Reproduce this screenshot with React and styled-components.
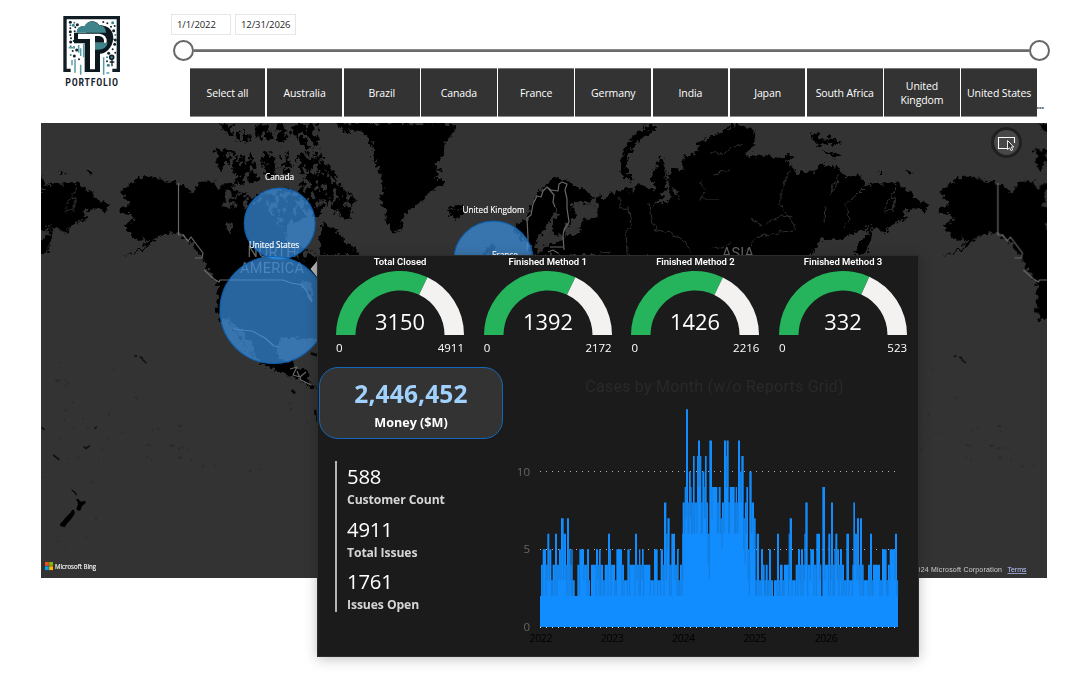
import React from "react";
import styled, { createGlobalStyle } from "styled-components";

const ui = `"Open Sans", "Noto Sans", "Liberation Sans", sans-serif`;
const din = `Roboto, "Open Sans", sans-serif`;

const Global = createGlobalStyle`
  * { box-sizing: border-box; }
  body { margin: 0; background: #fff; font-family: ${ui}; overflow: hidden; }
`;

const Page = styled.main`
  width: 1072px;
  height: 677px;
  background: #fff;
`;

const Header = styled.header`
  display: flex;
  height: 123px;
`;

const Brand = styled.div`
  width: 171px;
  padding: 14px 0 0 61px;
  svg { display: block; }
`;

const Filters = styled.div`
  flex: 1;
  padding-top: 14px;
`;

const DateRow = styled.div`
  display: flex;
  gap: 4px;
`;

const DateBox = styled.div`
  width: ${(p) => p.$w}px;
  height: 21px;
  padding-left: 5px;
  border: 1px solid #e6e6e6;
  font-size: 9.5px;
  line-height: 19px;
  letter-spacing: -0.1px;
  color: #252423;
  white-space: nowrap;
`;

const Slider = styled.div`
  display: flex;
  align-items: center;
  width: 877px;
  height: 21px;
  margin: 5px 0 0 2px;
`;

const Track = styled.div`
  flex: 1;
  height: 3px;
  background: #6b6b6b;
  border-top: 1px solid #8c8c8c;
`;

const Thumb = styled.div`
  width: 21px;
  height: 21px;
  border: 2px solid #666;
  border-radius: 50%;
  background: #fff;
`;

const SlicerRow = styled.div`
  display: flex;
  align-items: flex-end;
  margin: 7px 0 0 18.5px;
`;

const Slicer = styled.div`
  display: grid;
  grid-template-columns: repeat(11, 1fr);
  gap: 1.4px;
  width: 847.5px;
  height: 49px;
`;

const SlicerButton = styled.button`
  padding: 0;
  border: 0;
  border-bottom: 1px solid #8a8a8a;
  border-top: 1px solid #777;
  background: #333;
  color: #fff;
  font: 10.5px/14px ${ui};
  letter-spacing: -0.1px;
`;

const More = styled.span`
  margin-left: -1px;
  font-size: 12px;
  font-weight: 700;
  line-height: 25px;
  letter-spacing: -0.9px;
  color: #666;
`;

const MapPanel = styled.section`
  position: relative;
  width: 1006px;
  height: 455px;
  margin-left: 41px;
  background: #333;
`;

const MapDrawing = styled.svg`
  display: block;
  font-family: ${ui};
`;

const Popup = styled.aside`
  position: absolute;
  left: 276px;
  top: 132px;
  width: 602px;
  height: 402px;
  padding: 1px 18px 0 1px;
  border: 1px solid #2c2c2c;
  background: #1b1b1b;
  box-shadow: 0 2px 12px rgba(0, 0, 0, 0.25);
  color: #fff;
`;

const Gauges = styled.div`
  display: grid;
  grid-template-columns: repeat(4, 128px);
  column-gap: 19.7px;
  padding-left: 17px;
`;

const GaugeBox = styled.div`
  display: flex;
  flex-direction: column;
`;

const GaugeTitle = styled.div`
  height: 14px;
  text-align: center;
  font: 600 9.5px/10px ${din};
  letter-spacing: -0.03px;
  white-space: nowrap;
`;

const Scale = styled.div`
  display: flex;
  justify-content: space-between;
  height: 21px;
  font-size: 11.5px;
  line-height: 24px;
`;

const Body = styled.div`
  display: flex;
  justify-content: space-between;
  padding-top: 10px;
`;

const Left = styled.div`
  width: 184px;
`;

const MoneyCard = styled.div`
  height: 72px;
  padding-top: 8px;
  border: 1px solid #1566b8;
  border-radius: 19px;
  background: #333;
  text-align: center;
`;

const MoneyValue = styled.div`
  font-size: 24.5px;
  font-weight: 700;
  line-height: 35px;
  letter-spacing: 0.15px;
  color: #a0d1ff;
`;

const MoneyLabel = styled.div`
  font-size: 12.6px;
  font-weight: 700;
  line-height: 24px;
`;

const KpiList = styled.div`
  height: 151px;
  margin: 22px 0 0 16px;
  padding: 1px 0 0 10px;
  border-left: 2px solid #b3b3b3;
`;

const Kpi = styled.div`
  height: 52.7px;
`;

const KpiValue = styled.div`
  font-size: 20.3px;
  line-height: 28px;
  letter-spacing: -0.2px;
`;

const KpiLabel = styled.div`
  padding-top: 1px;
  font-size: 12.2px;
  font-weight: 700;
  line-height: 17px;
  letter-spacing: -0.1px;
  color: #d6d6d6;
`;

const ChartBox = styled.div`
  width: 388px;
  margin-right: -5px;
`;

const ChartTitle = styled.div`
  margin: 10px 0 0 7px;
  height: 28px;
  text-align: center;
  font: 16px/20px ${din};
  letter-spacing: 0.25px;
  color: #292929;
  white-space: nowrap;
`;

function Logo() {
  const dots = [
    [91, 67], [91, 76], [91, 85], [91, 95], [91, 105], [103, 68], [112, 74], [106, 82], [104, 94], [100, 76],
    [93, 115], [101, 123], [92, 126], [92, 139], [102, 142], [110, 150], [98, 153], [92, 165], [103, 168], [117, 178],
    [202, 70], [218, 68], [213, 80], [224, 78], [221, 92], [226, 105], [218, 118], [224, 133], [218, 148], [201, 172],
    [206, 160], [201, 184], [226, 158], [205, 196], [190, 66], [209, 93], [226, 120],
  ];
  return (
    <svg width="60" height="74" viewBox="63 42 180 222">
      <rect x="70" y="48" width="169" height="168" fill="#fff" />
      <path d="M92 211H75V53H235V211H217" fill="none" stroke="#101d24" strokeWidth="10" />
      {dots.map(([x, y], i) => (
        <circle key={i} cx={x} cy={y} r={i % 3 === 0 ? 4.5 : 3} fill={i % 4 === 1 ? "#41828a" : "#142329"} />
      ))}
      <path d="M138 74C148 60 168 61 178 76C214 76 225 103 218 126C212 150 192 162 180 161V216H134V130H102V98H138Z" fill="#0c181e" />
      <path d="M110 98C109 82 124 75 133 79C140 62 166 58 177 76C190 75 197 84 198 98Z" fill="#3f838b" />
      <path d="M114 101H179Q201 104 200 125Q198 143 179 145H165V208H150V117H114Z" fill="#fff" />
      <path d="M165 108H178Q194 110 192 128H165Z" fill="#0c181e" />
      <path d="M165 128H203Q199 149 174 149H165Z" fill="#3f838b" />
      <path d="M122 145V168M131 132V172M116 135V158M105 178V218M122 194V224M96 180V196M191 172V224M199 219H208M86 143H105" stroke="#5a9ca3" strokeWidth="4.5" />
      <circle cx="215" cy="172" r="6" fill="#41828a" stroke="#12232b" strokeWidth="5" />
      <path d="M216 180V199M209 186H223" stroke="#12232b" strokeWidth="4" />
      <text x="67" y="257" transform="translate(9)" textLength="158" fontSize="30" fontWeight="600" fontFamily='"Liberation Sans Narrow", "Roboto Condensed", Roboto, sans-serif' fill="#16222b" lengthAdjust="spacing">PORTFOLIO</text>
    </svg>
  );
}

/* One full turn of the world; it is drawn again beside itself so that the map wraps round. */
function World() {
  return (
    <g id="world">
      <g filter="url(#coast)">
        <g transform="translate(40 120) scale(.33333)">
          <path d="M243 215L262 200 285 180 318 165 360 178 415 190 440 207 462 215 475 190 505 180 540 195 565 190 585 205 600 222 640 232 668 215 700 225 740 200 770 215 790 180 800 205 835 200 850 260 840 292 800 290 770 303 740 335 740 372 790 380 820 405 870 420V660L800 655 745 650 720 660 710 690 725 725 755 722 765 748 800 752 812 790 832 805 815 808 790 785 720 755 665 732 620 690 590 640 560 600 545 600 530 570 532 485 515 465 500 440 480 405 455 370 430 348 395 338 365 340 345 362 315 385 250 415 300 385 335 360 300 362 270 345 255 320 285 290 245 278 237 262 268 255Z" />
          <path d="M525 95L535 82 560 88 590 100 570 120 545 150 528 148 530 125ZM540 12L575 15 600 30 640 50 625 68 590 62 565 40 548 28ZM590 110L630 100 650 140 655 180 630 195 600 205 575 195 590 170 575 140ZM640 15L690 12 700 50 675 65 650 45ZM710 12L735 12 740 60 720 80 705 50ZM750 12L835 12V75L800 85 770 60 745 45ZM665 105L700 95 715 150 700 175 670 160ZM720 115L745 100 755 150 735 170ZM770 110L800 90 825 120 832 185 800 175 775 150ZM140 158L150 152 163 157 155 163Z" />
          <path d="M0 168L9 170 12 184 0 190Z" />
        </g>
        <g transform="translate(310 120) scale(.33333)">
          <path d="M75 10L105 35 150 30 170 48 187 75 190 110 205 145 215 175 222 210 207 240 228 265 230 310 245 332 268 338 275 310 290 275 320 255 345 240 352 220 385 205 412 180 375 175 390 150 372 132 398 112 400 80 412 60 438 30 430 10Z" />
          <path d="M0 50L18 55 20 80 0 85ZM0 10H30L25 30 0 35ZM10 100L45 105 60 140 75 165 90 200 130 230 143 245 128 262 125 295 100 305 85 280 60 265 30 230 15 190 25 160ZM0 170L25 190 50 215 45 240 15 230 0 235ZM38 300L62 325 90 340 105 365 130 380 150 405H30V350Z" />
          <path d="M415 265L440 265 462 258 464 285 440 298 420 285Z" />
          <path d="M530 385L545 370 555 385 550 405H520ZM608 330L625 310 650 300 665 255 685 220 710 195 740 170 775 185 800 200 830 210 850 232 838 252 805 245 785 250 795 285 780 310 760 330 770 345H800L820 300 870 290 872 250 868 225 885 240 905 235V405H660L665 370 640 365 625 340Z" />
        </g>
        <g transform="translate(600 120) scale(.33333)">
          <path d="M145 16L163 15 166 28 130 50 102 76 82 110 80 145 105 182 85 180 58 152 57 138 66 105 80 75 112 38Z" />
          <path d="M-10 225L12 242 35 220 62 210 100 208 115 187 135 200 168 215 157 175 165 145 182 112 196 128 200 160 207 180 215 140 250 152 250 108 290 100 298 70 330 50 370 35 395 12 440 20 470 42 462 78 435 105 450 112 490 105 545 112 575 140 590 168 605 155 650 155 662 128 690 140 715 143 730 170 760 165 778 168 800 195 855 190 890 190 930 215 955 240 988 252 975 275 945 262 925 272 905 275 920 300 880 310 855 340 818 320 812 350 805 385 785 405 760 400 775 370 800 345 808 318 760 340 730 355 665 358 645 385 625 410H-10Z" />
          <path d="M635 45L655 40 660 60 695 50 715 62 700 75 675 70 645 75ZM660 90L710 100 725 110 700 112ZM695 60L725 68 715 76 700 70ZM555 105L578 108 565 125 548 118ZM832 158L845 152 853 157 845 163Z" />
        </g>
      </g>
      <g transform="translate(40 340) scale(.33333)">
        <path d="M59 553L68 544 78 531 90 520 97 509 103 511 104 522 92 539 82 550 74 562 61 558ZM109 508L114 493 112 483 107 478 114 477 123 485 136 482 137 489 126 498 122 511 115 512ZM92 448L102 452 110 461 110 468 104 460Z" />
      </g>
      <g fill="#333" filter="url(#coast)">
        <path d="M545 230L552 217 557 206 557 214 552 225 553 233 563 237 560 242 545 245 539 254 535 243ZM665 170L668 180 671 193 668 203 658 203 651 206 660 199 666 190ZM672 188L678 192 679 198 673 193ZM232 185L245 190 238 194ZM222 200L238 204 225 207ZM225 222L234 224 230 232ZM264 190L270 188 266 198Z" />
        <path d="M225 317L237 331 248 351 256 356 250 341 238 327ZM303 281L311 283 314 301 308 299 309 291 302 289Z" />
      </g>
      <g clipPath="url(#arctic)">
        <rect x="200" y="123" width="260" height="140" filter="url(#lakes)" />
      </g>
      <g transform="translate(40 340) scale(.33333)">
        <path d="M283 48H291M299 51L308 54M306 57L319 69M4 262L14 269M39 345L58 359M131 320L138 325 149 317M163 265L170 261" fill="none" stroke="#000" strokeWidth="3.5" />
        <path d="M56 68h3M46 122h14M77 122h3M82 130h5M75 137h3M97 188h3M220 86h3M285 172h3M290 176h3M74 211h3M205 222h4M204 228h3M318 228h3M71 240h3M127 236h3M142 262h3M100 266h3M336 270h3M352 267h3M416 258h8M422 274h3M245 277h3M60 295h3M184 330h3M112 352h3M85 357h3M174 357h3M205 296h3M320 315h6M331 317h3M378 300h3M390 317h12M415 325h5M428 323h4M445 327h3M319 351h3M416 353h10M333 360h3M453 362h3M486 379h5M523 377h3M629 394h4M656 388h3M155 427h3M3 412h3M166 535h4M52 604h3M138 592h3M75 626h2M310 590h2M747 190h4M750 208h7M800 246h3" stroke="#1f1f1f" strokeWidth="3" />
        <path d="M812 40L832 46M826 210V225M832 225V245M755 150l10 10" stroke="#000" strokeWidth="7" />
      </g>
      <g fill="none" stroke="#686868" strokeWidth="1.2" strokeLinejoin="round">
        <path d="M178.500 183V235H183L188 241 191 237 203 253 202 258H195M204 270L214 279 219 282 220 280H283L291 283 302 285 307 292 312 302M233 329L252 331 265 338 274 346 279 347M290 369L297 367 293 375 300 377 306 372M297 371L301 380 311 385" />
        <path d="M527 251L528 238 527 218 531 215 533 204 537 196 541 197 543 191 547 187 551 190 558 191 559 184 562 182 567 184 565 190 567 199 567 208 569 222 564 230 563 236 564 250M548 188L554 195 553 202 555 207M548 252L553 250 558 253M550 247H563" />
      </g>
      <g fill="none" stroke="#303030" strokeWidth="1" filter="url(#river)">
        <path d="M620 196L620 209 629 208 631 226 626 230 627 253M649 203L651 220 656 230 670 232 685 240 692 255M711 155L715 150 722 156 730 148 745 144M714 174L730 170M700 182L706 191 699 199 712 199 718 199M788 165L789 174 781 190 781 205 788 216 794 225 794 231 780 232 769 236 763 233 745 250M794 218L782 216 766 223M750 218L762 226M710 250L725 246 734 241M839 174L836 186 830 194M825 206L824 222M830 194L835 180M864 188L857 195 845 205 850 218 843 227M897 187L887 203 884 213 895 205M888 199L895 198 892 211M600 253L610 252" />
      </g>
    </g>
  );
}

function Bubbles() {
  return (
    <g fill="#3c97ec" fillOpacity=".67" stroke="#0d64b8" strokeOpacity=".9" strokeWidth="1.2">
      <circle cx="279.700" cy="223.500" r="35.400" />
      <circle cx="273.500" cy="310" r="53.500" />
      <circle cx="493.500" cy="261" r="39.800" />
    </g>
  );
}

function MapLabel({ x, y, width, children }) {
  return (
    <text x={x} y={y} textLength={width} lengthAdjust="spacingAndGlyphs">{children}</text>
  );
}

function WorldMap() {
  return (
    <MapDrawing width="1006" height="455" viewBox="41 123 1006 455">
      <defs>
        <filter id="coast" x="-5%" y="-5%" width="110%" height="110%">
          <feTurbulence type="fractalNoise" baseFrequency="0.22" numOctaves="3" seed="4" result="n" />
          <feDisplacementMap in="SourceGraphic" in2="n" scale="10" xChannelSelector="R" yChannelSelector="G" />
        </filter>
        <filter id="river" x="-5%" y="-5%" width="110%" height="110%">
          <feTurbulence type="fractalNoise" baseFrequency="0.15" numOctaves="2" seed="9" result="n" />
          <feDisplacementMap in="SourceGraphic" in2="n" scale="7" xChannelSelector="R" yChannelSelector="G" />
        </filter>
        <filter id="lakes" x="0" y="0" width="100%" height="100%" colorInterpolationFilters="sRGB">
          <feTurbulence type="fractalNoise" baseFrequency="0.16 0.12" numOctaves="4" seed="12" />
          <feColorMatrix values="0 0 0 0 .2  0 0 0 0 .2  0 0 0 0 .2  14 0 0 0 -7.500" />
        </filter>
        <clipPath id="arctic">
          <path d="M212 123H335L345 170 360 195 362 230 345 225 325 215 316 250 316 262H300L262 200 235 215 225 200 212 180 195 180Z" />
        </clipPath>
      </defs>
      <World />
      <use href="#world" x="819.400" />
      <use href="#world" x="-819.400" />
      <g fill="#646464" fontFamily="Roboto, sans-serif" fontSize="14.500">
        <text x="247.500" y="257" textLength="49">NORTH</text>
        <text x="240" y="273" textLength="64">AMERICA</text>
        <text x="722" y="258" textLength="32">ASIA</text>
      </g>
      <Bubbles />
      <g fill="#fff" fontSize="9.200" stroke="#fff" strokeWidth=".15">
        <MapLabel x="265" y="180" width="29">Canada</MapLabel>
        <MapLabel x="249" y="248" width="50">United States</MapLabel>
        <MapLabel x="462.500" y="213" width="62">United Kingdom</MapLabel>
        <MapLabel x="492" y="258" width="26">France</MapLabel>
      </g>
      <path d="M317 261V277L310.500 269Z" fill="#b5b5b5" />
      <path fill="#f25022" d="M45 562h3.800v3.800H45z" />
      <path fill="#7fba00" d="M49.200 562h3.800v3.800h-3.800z" />
      <path fill="#00a4ef" d="M45 566.300h3.800v3.800H45z" />
      <path fill="#ffb900" d="M49.200 566.300h3.800v3.800h-3.800z" />
      <g fontSize="7" fill="#eee" stroke="#eee" strokeWidth=".2">
        <MapLabel x="55" y="569" width="41">Microsoft Bing</MapLabel>
      </g>
      <g fontFamily='"Liberation Sans", sans-serif' fontSize="7">
        <text x="905" y="572" fill="#d0d0d0" textLength="97">© 2024 Microsoft Corporation</text>
        <text x="1007.500" y="572" fill="#b8c8ff" textDecoration="underline" textLength="19">Terms</text>
      </g>
      <circle cx="1006.500" cy="142.500" r="14" fill="#484848" stroke="#202020" strokeWidth="3" />
      <path d="M1007 148.500H998.500V137.500H1014.500V143" fill="none" stroke="#fff" strokeWidth="1.100" />
      <path d="M1007.500 140.500V149.500L1009.600 147.800 1011 150.600 1012.700 149.800 1011.400 147H1013.800Z" fill="#333" stroke="#fff" strokeWidth=".9" />
    </MapDrawing>
  );
}

function Gauge({ title, value, max }) {
  const a = Math.PI * (1 - value / max);
  const at = (r, t) => `${64 + r * Math.cos(t)} ${64 - r * Math.sin(t)}`;
  const band = (from, to) =>
    `M${at(64, from)}A64 64 0 0 1 ${at(64, to)}L${at(44.5, to)}A44.500 44.500 0 0 0 ${at(44.5, from)}Z`;
  return (
    <GaugeBox>
      <GaugeTitle>{title}</GaugeTitle>
      <svg width="128" height="65" viewBox="0 0 128 65">
        <path d={band(Math.PI, a)} fill="#25b35b" />
        <path d={band(a, 0)} fill="#f3f2f1" />
        <text x="64" y="59" textAnchor="middle" fill="#fff" fontSize="21.800">{value}</text>
      </svg>
      <Scale><span>0</span><span>{max}</span></Scale>
    </GaugeBox>
  );
}

/* [end, cases] runs along the time axis, three steps to a pixel. */
const runs = [
  [3,2],[8,4],[18,5],[22,4],[28,6],[34,5],[38,3],[45,4],[51,6],[57,4],[63,5],[71,7],[78,6],[81,4],[87,7],[92,5],[94,4],[98,5],[104,3],[112,2],[118,4],[132,5],[141,4],[147,5],[150,3],[153,2],[168,4],[174,5],[177,4],[182,5],[189,4],[194,3],[204,4],[210,6],[213,5],[225,4],[229,3],[246,5],[252,4],[262,3],[269,5],[285,4],[291,6],[297,4],[301,5],[306,4],[311,5],[331,4],[342,3],[353,5],[362,3],[369,5],[372,4],[379,8],[382,6],[389,7],[394,4],[405,6],[411,4],[416,5],[420,3],[426,4],[428,6],[434,8],[438,9],[444,14],[447,8],[452,10],[455,9],[459,8],[464,11],[471,8],[474,11],[480,12],[484,11],[487,8],[493,10],[495,9],[500,11],[504,8],[508,6],[516,12],[532,9],[536,8],
  [542,9],[546,7],[552,8],[559,12],[561,11],[566,12],[569,8],[584,9],[587,8],[591,9],[594,8],[600,12],[604,10],[611,11],[615,7],[619,8],[624,9],[628,5],[635,10],[642,8],[647,7],[650,3],[657,6],[663,3],[669,5],[674,4],[677,3],[683,4],[687,3],[693,5],[699,3],[702,2],[711,3],[717,6],[720,3],[728,4],[732,3],[746,4],[749,6],[756,7],[767,3],[774,4],[780,5],[783,4],[789,5],[793,4],[796,6],[803,8],[811,4],[822,5],[829,4],[840,6],[844,4],[847,2],[855,9],[865,4],[871,6],[873,4],[879,8],[883,4],[886,5],[892,6],[897,5],[900,4],[906,5],[912,4],[919,3],[927,6],[937,3],[940,4],[945,8],[951,6],[957,7],[960,4],[966,7],[971,4],[984,3],[990,4],[996,6],[999,3],[1020,4],[1026,3],[1040,5],[1044,3],[1049,4],[1065,5],[1071,6],[1074,3],
];
const unit = 15.55;
const plotX = 23;
const base = 222;

function CasesChart() {
  let d = `M${plotX} ${base}`;
  const seams = [];
  runs.forEach(([end, v], i) => {
    d += `V${base - v * unit}H${plotX + end / 3}`;
    const low = Math.min(v, runs[i + 1] ? runs[i + 1][1] : v);
    const floor = low > 7 ? low - 2 : Math.max(2, low - 1 - (i % 3));
    if (low > floor) seams.push(`M${plotX + end / 3} ${base - low * unit}V${base - floor * unit}`);
  });
  d += `V${base}Z`;
  return (
    <svg width="388" height="245" viewBox="0 0 388 245" fontSize="11.500">
      {[0, 5, 10].map((n) => (
        <text key={n} x="13" y={base - n * unit + 4} textAnchor="end" fill="#666">{n}</text>
      ))}
      <g stroke="#b5b5b5" strokeWidth="1" strokeDasharray="1 5">
        <path d="M23 66.500H380M23 144.500H380" />
      </g>
      <path d={d} fill="#118dff" />
      <path d={seams.join("")} stroke="#1b5f9f" strokeWidth=".8" opacity=".5" />
      <path d="M23 222.500H380" stroke="#cfe6ff" strokeDasharray="1 5" />
      {[2022, 2023, 2024, 2025, 2026].map((y, i) => (
        <text key={y} x={24 + i * 71.3} y="237" textAnchor="middle" fontSize="10.500" textLength="23" fill="#000">{y}</text>
      ))}
    </svg>
  );
}

const countries = [
  "Select all", "Australia", "Brazil", "Canada", "France", "Germany",
  "India", "Japan", "South Africa", "United Kingdom", "United States",
];

const gauges = [
  ["Total Closed", 3150, 4911],
  ["Finished Method 1", 1392, 2172],
  ["Finished Method 2", 1426, 2216],
  ["Finished Method 3", 332, 523],
];

const kpis = [["588", "Customer Count"], ["4911", "Total Issues"], ["1761", "Issues Open"]];

export default function App() {
  return (
    <Page>
      <Global />
      <Header>
        <Brand><Logo /></Brand>
        <Filters>
          <DateRow>
            <DateBox $w={60}>1/1/2022</DateBox>
            <DateBox $w={61}>12/31/2026</DateBox>
          </DateRow>
          <Slider><Thumb /><Track /><Thumb /></Slider>
          <SlicerRow>
            <Slicer>
              {countries.map((c) => <SlicerButton key={c}>{c}</SlicerButton>)}
            </Slicer>
            <More>...</More>
          </SlicerRow>
        </Filters>
      </Header>
      <MapPanel>
        <WorldMap />
        <Popup>
          <Gauges>
            {gauges.map(([t, v, m]) => <Gauge key={t} title={t} value={v} max={m} />)}
          </Gauges>
          <Body>
            <Left>
              <MoneyCard>
                <MoneyValue>2,446,452</MoneyValue>
                <MoneyLabel>Money ($M)</MoneyLabel>
              </MoneyCard>
              <KpiList>
                {kpis.map(([v, l]) => (
                  <Kpi key={l}><KpiValue>{v}</KpiValue><KpiLabel>{l}</KpiLabel></Kpi>
                ))}
              </KpiList>
            </Left>
            <ChartBox>
              <ChartTitle>Cases by Month (w/o Reports Grid)</ChartTitle>
              <CasesChart />
            </ChartBox>
          </Body>
        </Popup>
      </MapPanel>
    </Page>
  );
}
